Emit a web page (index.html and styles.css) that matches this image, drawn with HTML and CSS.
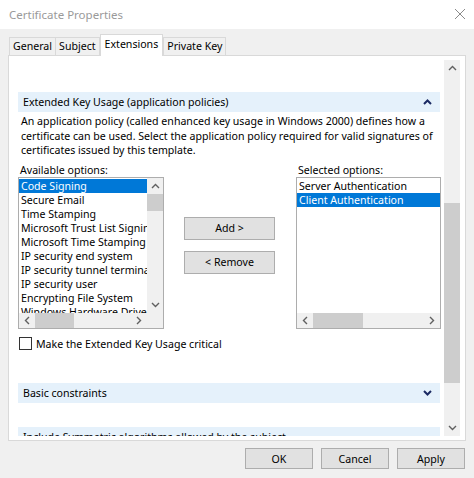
FILE: index.html
```html
<!DOCTYPE html>
<html lang="en">
<head>
    <meta charset="UTF-8">
    <title>Certificate Properties</title>
    <link rel="stylesheet" href="styles.css">
</head>
<body>
    <div class="window">
        <div class="titlebar">
            <span class="title">Certificate Properties</span>
            <svg class="close" width="12" height="12" viewBox="0 0 12 12">
                <path d="M1 1 L11 11 M11 1 L1 11" stroke="#8a8a8a" stroke-width="1" fill="none"/>
            </svg>
        </div>

        <div class="dialog">
            <div class="tabs">
                <div class="tab">General</div>
                <div class="tab">Subject</div>
                <div class="tab active">Extensions</div>
                <div class="tab">Private Key</div>
            </div>

            <div class="tab-panel">
                <div class="scroll-content">
                    <div class="section-header">
                        <span>Extended Key Usage (application policies)</span>
                        <svg class="chev" width="9" height="6" viewBox="0 0 9 6">
                            <path d="M1 5 L4.5 1.5 L8 5" stroke="#1b2a63" stroke-width="2" fill="none"/>
                        </svg>
                    </div>
                    <p class="description">
                        An application policy (called enhanced key usage in Windows 2000) defines how a<br>
                        certificate can be used. Select the application policy required for valid signatures of<br>
                        certificates issued by this template.
                    </p>

                    <div class="picker">
                        <div class="picker-col">
                            <div class="list-label">Available options:</div>
                            <div class="listbox">
                                <div class="list-body">
                                    <div class="list-items">
                                        <div class="item selected">Code Signing</div>
                                        <div class="item">Secure Email</div>
                                        <div class="item">Time Stamping</div>
                                        <div class="item">Microsoft Trust List Signing</div>
                                        <div class="item">Microsoft Time Stamping</div>
                                        <div class="item">IP security end system</div>
                                        <div class="item">IP security tunnel termination</div>
                                        <div class="item">IP security user</div>
                                        <div class="item">Encrypting File System</div>
                                        <div class="item">Windows Hardware Driver Verification</div>
                                    </div>
                                    <div class="vscroll">
                                        <svg class="arrow" width="9" height="6" viewBox="0 0 9 6"><path d="M1 5 L4.5 1.5 L8 5" stroke="#606060" stroke-width="1.4" fill="none"/></svg>
                                        <div class="vthumb"></div>
                                        <div class="spacer"></div>
                                        <svg class="arrow" width="9" height="6" viewBox="0 0 9 6"><path d="M1 1 L4.5 4.5 L8 1" stroke="#606060" stroke-width="1.4" fill="none"/></svg>
                                    </div>
                                </div>
                                <div class="hbar">
                                    <div class="hscroll">
                                        <svg class="arrow" width="6" height="9" viewBox="0 0 6 9"><path d="M5 1 L1.5 4.5 L5 8" stroke="#606060" stroke-width="1.4" fill="none"/></svg>
                                        <div class="hthumb left-thumb"></div>
                                        <div class="spacer"></div>
                                        <svg class="arrow" width="6" height="9" viewBox="0 0 6 9"><path d="M1 1 L4.5 4.5 L1 8" stroke="#606060" stroke-width="1.4" fill="none"/></svg>
                                    </div>
                                    <div class="corner"></div>
                                </div>
                            </div>
                        </div>

                        <div class="picker-buttons">
                            <button class="btn move-btn">Add &gt;</button>
                            <button class="btn move-btn">&lt; Remove</button>
                        </div>

                        <div class="picker-col">
                            <div class="list-label">Selected options:</div>
                            <div class="listbox">
                                <div class="list-body">
                                    <div class="list-items">
                                        <div class="item">Server Authentication</div>
                                        <div class="item selected">Client Authentication</div>
                                    </div>
                                </div>
                                <div class="hbar">
                                    <div class="hscroll">
                                        <svg class="arrow" width="6" height="9" viewBox="0 0 6 9"><path d="M5 1 L1.5 4.5 L5 8" stroke="#606060" stroke-width="1.4" fill="none"/></svg>
                                        <div class="hthumb right-thumb"></div>
                                        <div class="spacer"></div>
                                        <svg class="arrow" width="6" height="9" viewBox="0 0 6 9"><path d="M1 1 L4.5 4.5 L1 8" stroke="#606060" stroke-width="1.4" fill="none"/></svg>
                                    </div>
                                </div>
                            </div>
                        </div>
                    </div>

                    <label class="check-row">
                        <span class="checkbox"></span>
                        Make the Extended Key Usage critical
                    </label>

                    <div class="section-header second">
                        <span>Basic constraints</span>
                        <svg class="chev" width="9" height="6" viewBox="0 0 9 6">
                            <path d="M1 1 L4.5 4.5 L8 1" stroke="#1b2a63" stroke-width="2" fill="none"/>
                        </svg>
                    </div>

                    <div class="section-header third">
                        <span>Include Symmetric algorithms allowed by the subject</span>
                    </div>
                </div>

                <div class="panel-scroll">
                    <svg class="arrow" width="9" height="6" viewBox="0 0 9 6"><path d="M1 5 L4.5 1.5 L8 5" stroke="#606060" stroke-width="1.4" fill="none"/></svg>
                    <div class="panel-track-top"></div>
                    <div class="panel-thumb"></div>
                    <div class="spacer"></div>
                    <svg class="arrow" width="9" height="6" viewBox="0 0 9 6"><path d="M1 1 L4.5 4.5 L8 1" stroke="#606060" stroke-width="1.4" fill="none"/></svg>
                </div>
            </div>

            <div class="footer">
                <button class="btn footer-btn">OK</button>
                <button class="btn footer-btn">Cancel</button>
                <button class="btn footer-btn">Apply</button>
            </div>
        </div>
    </div>
</body>
</html>
```

FILE: styles.css
```css
body {
    margin: 0;
    font-family: "Noto Sans", "Open Sans", sans-serif;
    font-size: 10.6px;
    color: #000;
    background: #f0f0f0;
    overflow: hidden;
}

.window {
    width: 474px;
    height: 478px;
    background: #f0f0f0;
}

.titlebar {
    height: 29px;
    background: #fff;
    display: flex;
    align-items: center;
    justify-content: space-between;
    padding: 0 8px 0 9px;
}

.title {
    color: #9a9a9a;
    font-size: 11.5px;
}

.close {
    margin-top: -1px;
}

.dialog {
    padding: 8px 8px 0 8px;
}

.tabs {
    display: flex;
    height: 18px;
    padding-left: 1px;
    align-items: flex-end;
}

.tab {
    height: 17px;
    line-height: 17px;
    padding: 0 3px;
    border: 1px solid #d9d9d9;
    border-bottom: none;
    background: #f0f0f0;
    margin-right: -1px;
}

.tab.active {
    height: 21px;
    line-height: 19px;
    background: #fff;
    margin: 0 0 -1px 1px;
    position: relative;
    z-index: 1;
    padding: 0 4px;
}

.tab-panel {
    height: 384px;
    background: #fff;
    border: 1px solid #d9d9d9;
    display: flex;
    overflow: hidden;
}

.scroll-content {
    flex: 1;
    padding: 36px 4px 0 9px;
    margin-bottom: 4px;
    overflow: hidden;
}

.section-header {
    height: 20px;
    background: #e5f1fb;
    display: flex;
    align-items: center;
    justify-content: space-between;
    padding: 0 8px 0 5px;
    white-space: nowrap;
}

.section-header.second {
    margin-top: 32px;
}

.section-header.third {
    margin-top: 24px;
}

.description {
    margin: 2px 0 0 3px;
    line-height: 14.5px;
    white-space: nowrap;
}

.picker {
    display: flex;
    margin-top: 6px;
}

.list-label {
    height: 13px;
    line-height: 13px;
    padding-left: 2px;
}

.listbox {
    border: 1px solid #adadad;
    height: 150px;
    display: flex;
    flex-direction: column;
    background: #fff;
}

.picker-col:first-child .listbox {
    width: 144px;
}

.picker-col:last-child .listbox {
    width: 143px;
}

.list-body {
    flex: 1;
    display: flex;
    overflow: hidden;
}

.list-items {
    flex: 1;
    overflow: hidden;
    padding-top: 1px;
}

.item {
    height: 14px;
    line-height: 14px;
    padding-left: 2px;
    white-space: nowrap;
    overflow: hidden;
}

.item.selected {
    background: #0078d7;
    color: #fff;
}

.vscroll {
    width: 16px;
    background: #f0f0f0;
    display: flex;
    flex-direction: column;
    align-items: center;
}

.vscroll .arrow {
    margin: 5px 0;
}

.vthumb {
    width: 16px;
    height: 17px;
    background: #cdcdcd;
}

.spacer {
    flex: 1;
}

.hbar {
    height: 15px;
    display: flex;
}

.hscroll {
    flex: 1;
    background: #f0f0f0;
    display: flex;
    align-items: center;
}

.hscroll .arrow {
    margin: 0 5px;
}

.hthumb {
    height: 15px;
    background: #cdcdcd;
}

.left-thumb {
    width: 39px;
}

.right-thumb {
    width: 50px;
}

.corner {
    width: 16px;
    background: #f0f0f0;
}

.picker-buttons {
    display: flex;
    flex-direction: column;
    gap: 11px;
    margin: 53px 21px 0 20px;
}

.btn {
    font-family: inherit;
    font-size: 10.6px;
    background: #e1e1e1;
    border: 1px solid #adadad;
    color: #000;
    padding: 0;
}

.move-btn {
    width: 91px;
    height: 23px;
}

.check-row {
    display: flex;
    align-items: center;
    gap: 4px;
    margin: 8px 0 0 1px;
    height: 14px;
}

.checkbox {
    width: 11px;
    height: 11px;
    border: 1px solid #333;
    background: #fff;
}

.panel-scroll {
    width: 16px;
    margin: 4px 5px 4px 0;
    background: #f0f0f0;
    display: flex;
    flex-direction: column;
    align-items: center;
}

.panel-scroll .arrow {
    margin: 5px 0;
}

.panel-track-top {
    height: 127px;
}

.panel-thumb {
    width: 16px;
    height: 180px;
    background: #cdcdcd;
}

.footer {
    display: flex;
    justify-content: flex-end;
    gap: 8px;
    margin-top: 7px;
    padding-right: 1px;
}

.footer-btn {
    width: 68px;
    height: 21px;
}
```
